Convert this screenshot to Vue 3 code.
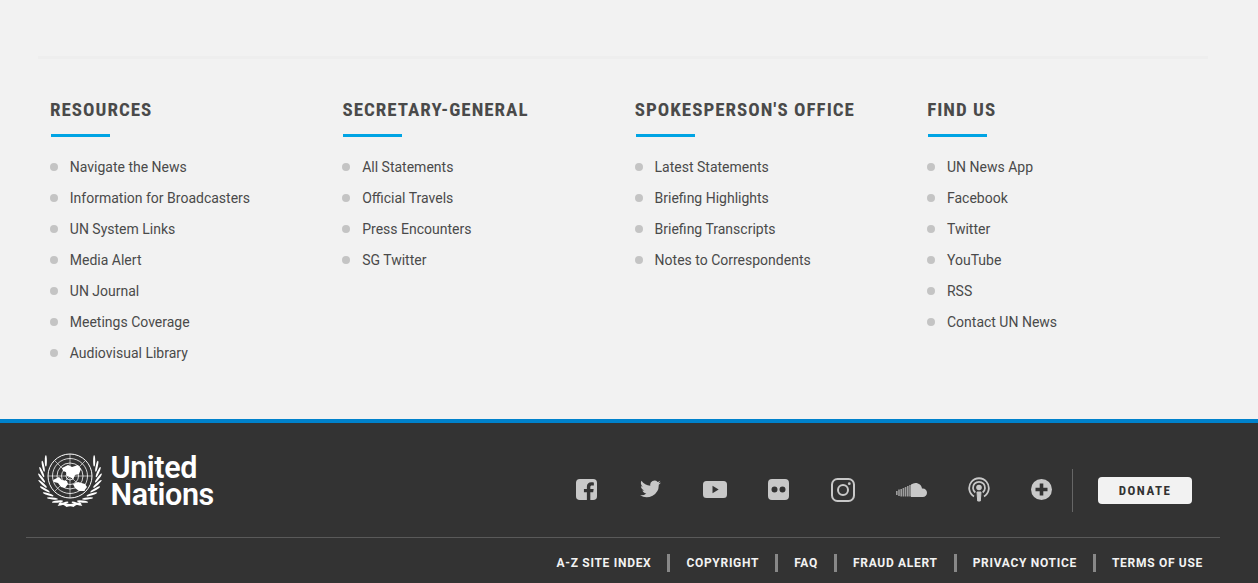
<script setup>
const columns = [
  { title: 'Resources', links: ['Navigate the News', 'Information for Broadcasters', 'UN System Links', 'Media Alert', 'UN Journal', 'Meetings Coverage', 'Audiovisual Library'] },
  { title: 'Secretary-General', links: ['All Statements', 'Official Travels', 'Press Encounters', 'SG Twitter'] },
  { title: "Spokesperson's Office", links: ['Latest Statements', 'Briefing Highlights', 'Briefing Transcripts', 'Notes to Correspondents'] },
  { title: 'Find Us', links: ['UN News App', 'Facebook', 'Twitter', 'YouTube', 'RSS', 'Contact UN News'] },
]
const legal = ['A-Z Site Index', 'Copyright', 'FAQ', 'Fraud Alert', 'Privacy Notice', 'Terms of Use']
const leaves = [58, 70, 82, 94, 106, 118, 130, 142, 154, 166]
</script>

<template>
  <div class="page">
    <section class="menu">
      <div class="rule"></div>
      <div class="cols">
        <div v-for="c in columns" :key="c.title" class="col">
          <h3 class="title"><span class="title-text">{{ c.title }}</span></h3>
          <ul class="list">
            <li v-for="l in c.links" :key="l" class="item">{{ l }}</li>
          </ul>
        </div>
      </div>
    </section>

    <footer class="foot">
      <div class="foot-top">
        <div class="brand">
          <svg class="emblem" viewBox="0 0 64 54" fill="none">
            <g stroke="#fff" stroke-width=".8">
              <circle cx="32" cy="23" r="22" stroke-width="1" />
              <circle cx="32" cy="23" r="17.500" />
              <circle cx="32" cy="23" r="13" />
              <circle cx="32" cy="23" r="8.500" />
              <circle cx="32" cy="23" r="4" />
              <path d="M32 1v44M10 23h44M16.500 7.500l31 31M47.500 7.500l-31 31" stroke-width=".6" />
            </g>
            <path fill="#fff" d="M15 27l6-3 3 3 5 1 1 3-3 4-4-1-3-4-4-1zM24 15l6-3 4 2 6-2 3 4-2 5-4 1-2 4-3-2-3-1-1-4-3-1zM35 31l5-2 7 2 2 3-3 4-5 0-4-3z" />
            <g fill="#fff">
              <g v-for="a in leaves" :key="a">
                <g :transform="`rotate(${a} 32 23) translate(32 -5.500) rotate(-58)`"><ellipse rx="1.050" ry="5.600" /></g>
                <g :transform="`translate(64 0) scale(-1 1) rotate(${a} 32 23) translate(32 -5.500) rotate(-58)`"><ellipse rx="1.050" ry="5.600" /></g>
              </g>
              <path d="M22 49q10 4 20 0l1.500 2q-5 0-8 3-3-1.500-7 0-3-3-8-3z" />
            </g>
          </svg>
          <div class="wordmark">United<br />Nations</div>
        </div>

        <div class="actions">
          <div class="socials">
            <svg class="ic" viewBox="0 0 22 22"><path fill="#c8c8c8" d="M4 0h14a4 4 0 0 1 4 4v14a4 4 0 0 1-4 4h-3v-8h3l.5-3.500H15V8.500c0-1 .4-1.700 1.800-1.700h1.900V3.600c-.4 0-1.500-.2-2.700-.2-2.800 0-4.600 1.700-4.600 4.700v2.400H8.300V14h3.100v8H4a4 4 0 0 1-4-4V4a4 4 0 0 1 4-4z" /></svg>
            <svg class="ic" viewBox="0 0 22 20"><path fill="#c8c8c8" d="M22 2.700c-.8.400-1.700.6-2.600.7.900-.6 1.600-1.400 2-2.500-.9.500-1.900.9-2.900 1.100A4.500 4.500 0 0 0 10.800 6C7 5.800 3.600 4 1.500.9.300 3 .900 5.700 2.900 7c-.7 0-1.400-.2-2-.6 0 2.200 1.500 4.100 3.600 4.600-.7.200-1.400.2-2 .1.600 1.800 2.300 3.100 4.200 3.100A9 9 0 0 1 0 16.100 12.800 12.800 0 0 0 19.700 5c.9-.6 1.700-1.400 2.300-2.300z" /></svg>
            <svg class="ic yt" viewBox="0 0 24 17"><path fill="#c8c8c8" fill-rule="evenodd" d="M3.500 0h17A3.500 3.500 0 0 1 24 3.500v10a3.500 3.500 0 0 1-3.500 3.500h-17A3.500 3.500 0 0 1 0 13.500v-10A3.500 3.500 0 0 1 3.500 0zM9.500 4.800v7.400l6.200-3.700z" /></svg>
            <svg class="ic" viewBox="0 0 21 21"><path fill="#c8c8c8" fill-rule="evenodd" d="M4 0h13a4 4 0 0 1 4 4v13a4 4 0 0 1-4 4H4a4 4 0 0 1-4-4V4a4 4 0 0 1 4-4zM6.500 7.500a3 3 0 1 0 0 6 3 3 0 0 0 0-6zM14.500 7.500a3 3 0 1 0 0 6 3 3 0 0 0 0-6z" /></svg>
            <svg class="ic ig" viewBox="0 0 24 24" fill="none" stroke="#c8c8c8"><rect x="1" y="1" width="22" height="22" rx="5.500" stroke-width="2" /><circle cx="12" cy="12" r="5" stroke-width="2" /><circle cx="18.300" cy="5.700" r="1.400" fill="#c8c8c8" stroke="none" /></svg>
            <svg class="ic sc" viewBox="0 0 31 14"><path fill="#c8c8c8" d="M15 1.500C16.500.500 18 0 19.500 0c3.500 0 6 2.300 6.500 5.500 2.700-.5 5 1.500 5 4.200 0 2.400-1.800 4.300-4.200 4.300H15z" /><path stroke="#c8c8c8" stroke-opacity=".72" stroke-width="1.600" d="M.8 8v4M3 6.500V13M5.200 6v7.500M7.400 5v8.500M9.600 4v9.500M11.800 3v10.500M14 2v11.500" /></svg>
            <svg class="ic pod" viewBox="0 0 22 26" fill="none" stroke="#c8c8c8" stroke-width="1.800"><path d="M6 20.500A9.800 9.800 0 1 1 16 20.500" /><path d="M7.300 16.500a6 6 0 1 1 7.400 0" /><circle cx="11" cy="11.500" r="2.800" fill="#c8c8c8" stroke="none" /><path d="M9 16h4l-.7 9h-2.600z" fill="#c8c8c8" stroke="#c8c8c8" stroke-width="1" stroke-linejoin="round" /></svg>
            <svg class="ic" viewBox="0 0 21 21"><circle cx="10.500" cy="10.500" r="10.500" fill="#c8c8c8" /><path stroke="#333" stroke-width="3.600" d="M10.500 4.500v12M4.500 10.500h12" /></svg>
          </div>
          <div class="vline"></div>
          <a class="donate">DONATE</a>
        </div>
      </div>

      <div class="foot-bottom">
        <nav class="legal">
          <a v-for="l in legal" :key="l" class="legal-link">{{ l }}</a>
        </nav>
      </div>
    </footer>
  </div>
</template>

<style>
html, body { margin: 0; background: #f2f2f2; }
</style>

<style scoped>
.page { width: 1258px; height: 583px; overflow: hidden; font-family: Roboto, "Liberation Sans", sans-serif; }
.menu { height: 419px; box-sizing: border-box; padding: 56px 50px 0 38px; background: #f2f2f2; }
.rule { height: 3px; background: #eeeeee; }
.cols { display: grid; grid-template-columns: repeat(4, 292.400px); margin: 39px 0 0 12px; }
.title { margin: 0; height: 38px; position: relative; font-size: 19px; line-height: 24px; font-weight: 700; color: #4a4a4a; text-transform: uppercase; }
.title-text { display: inline-block; letter-spacing: 1px; font-stretch: 75%; white-space: nowrap; }
.title::after { content: ""; position: absolute; left: 1px; top: 36px; width: 59px; height: 3px; background: #00a4e4; }
.list { list-style: none; margin: 16px 0 0; padding: 0; }
.item { position: relative; height: 31px; line-height: 31px; padding-left: 19.800px; font-size: 14px; color: #4a4a4a; }
.item::before { content: ""; position: absolute; left: 0; top: 11px; width: 8px; height: 8px; border-radius: 50%; background: #c4c4c4; }

.foot { height: 164px; box-sizing: border-box; background: #333; border-top: 4px solid #0082cc; position: relative; }
.foot-top { height: 114px; box-sizing: border-box; padding: 30px 66px 0 38px; display: flex; justify-content: space-between; align-items: flex-start; }
.brand { display: flex; align-items: flex-start; gap: 8.500px; }
.emblem { width: 64px; height: 54px; display: block; overflow: visible; }
.wordmark { color: #fff; font-weight: 600; font-size: 30.500px; line-height: 27px; letter-spacing: -.4px; margin-top: 1px; }
.actions { display: flex; align-items: center; margin-top: 16px; }
.socials { display: flex; align-items: center; width: 496px; height: 43px; position: relative; }
.ic { position: absolute; width: 21px; height: 21px; top: 10px; display: block; }
.ic:nth-child(1) { left: 0; }
.ic:nth-child(2) { left: 64px; top: 11px; height: 19px; width: 21px; }
.ic:nth-child(3) { left: 127px; top: 12px; width: 24px; height: 17px; }
.ic:nth-child(4) { left: 192px; }
.ic:nth-child(5) { left: 255px; top: 9px; width: 24px; height: 24px; }
.ic:nth-child(6) { left: 320px; top: 14px; width: 31px; height: 14px; }
.ic:nth-child(7) { left: 392px; top: 7px; width: 22px; height: 26px; }
.ic:nth-child(8) { left: 455px; }
.vline { width: 1px; height: 43px; background: #666; margin-right: 25px; }
.donate { width: 94px; height: 27px; line-height: 27px; text-align: center; background: #f2f2f2; border-radius: 4px; color: #333; font-size: 13px; font-stretch: 75%; font-weight: 700; letter-spacing: 1.500px; }

.foot-bottom { margin: 0 38px 0 26px; height: 46px; border-top: 1px solid #5a5a5a; display: flex; justify-content: flex-end; }
.legal { display: flex; align-items: flex-start; padding-top: 16px; padding-right: 17px; }
.legal-link { color: #f2f2f2; font-size: 12px; font-weight: 700; line-height: 18px; letter-spacing: .7px; text-transform: uppercase; white-space: nowrap; padding: 0 16px; border-left: 3px solid #888; }
.legal-link:first-child { border-left: 0; }
.legal-link:last-child { padding-right: 0; }
</style>
